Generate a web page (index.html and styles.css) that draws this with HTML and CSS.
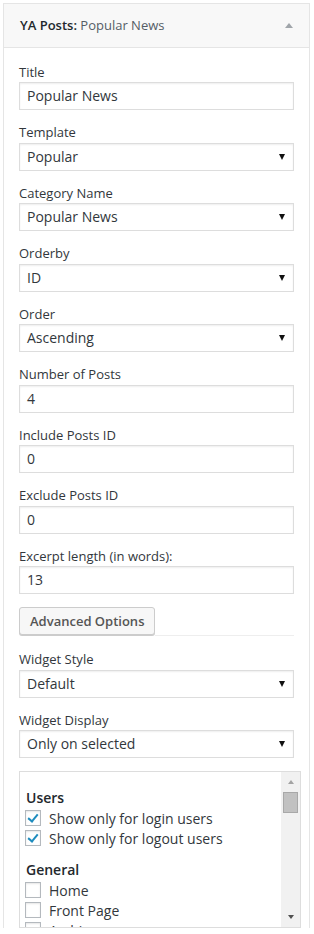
FILE: index.html
```html
<!DOCTYPE html>
<html>
<head>
  <meta charset="UTF-8">
  <link rel="stylesheet" href="styles.css">
</head>
<body>
  <div class="widget">
    <div class="widget-top">
      <h3 class="widget-title">YA Posts:<span class="in-widget-title"> Popular News</span></h3>
      <span class="toggle-arrow"></span>
    </div>

    <div class="widget-inside">
      <div class="field">
        <label>Title</label>
        <div class="text-input">Popular News</div>
      </div>
      <div class="field">
        <label>Template</label>
        <div class="select-input"><span>Popular</span><i class="caret"></i></div>
      </div>
      <div class="field">
        <label>Category Name</label>
        <div class="select-input"><span>Popular News</span><i class="caret"></i></div>
      </div>
      <div class="field">
        <label>Orderby</label>
        <div class="select-input"><span>ID</span><i class="caret"></i></div>
      </div>
      <div class="field">
        <label>Order</label>
        <div class="select-input"><span>Ascending</span><i class="caret"></i></div>
      </div>
      <div class="field">
        <label>Number of Posts</label>
        <div class="text-input">4</div>
      </div>
      <div class="field">
        <label>Include Posts ID</label>
        <div class="text-input">0</div>
      </div>
      <div class="field">
        <label>Exclude Posts ID</label>
        <div class="text-input">0</div>
      </div>
      <div class="field">
        <label>Excerpt length (in words):</label>
        <div class="text-input">13</div>
      </div>

      <div class="advanced-row">
        <button class="button">Advanced Options</button>
        <div class="advanced-line"></div>
      </div>

      <div class="field">
        <label>Widget Style</label>
        <div class="select-input"><span>Default</span><i class="caret"></i></div>
      </div>
      <div class="field">
        <label>Widget Display</label>
        <div class="select-input"><span>Only on selected</span><i class="caret"></i></div>
      </div>

      <div class="checklist">
        <div class="checklist-content">
          <h4>Users</h4>
          <div class="check-row"><span class="checkbox checked"></span>Show only for login users</div>
          <div class="check-row"><span class="checkbox checked"></span>Show only for logout users</div>
          <h4 class="group">General</h4>
          <div class="check-row"><span class="checkbox"></span>Home</div>
          <div class="check-row"><span class="checkbox"></span>Front Page</div>
          <div class="check-row"><span class="checkbox"></span>Archive</div>
        </div>
        <div class="scrollbar">
          <div class="scroll-btn"><i class="arrow-up"></i></div>
          <div class="scroll-thumb"></div>
          <div class="scroll-track"></div>
          <div class="scroll-btn"><i class="arrow-down"></i></div>
        </div>
      </div>
    </div>
  </div>
</body>
</html>
```

FILE: styles.css
```css
body {
  margin: 0;
  background: #fff;
  font-family: "Open Sans", sans-serif;
  font-size: 13px;
  color: #32373c;
}

.widget {
  width: 307px;
  margin: 3px 0 0 3px;
  border: 1px solid #e5e5e5;
  border-bottom: none;
  box-sizing: border-box;
  background: #fff;
}

.widget-top {
  height: 43px;
  display: flex;
  align-items: center;
  justify-content: space-between;
  padding: 0 16px 0 16px;
  background: #f8f8f8;
  border-bottom: 1px solid #e5e5e5;
}

.widget-title {
  margin: 0;
  font-size: 13px;
  font-weight: 600;
  color: #23282d;
  line-height: 43px;
}

.in-widget-title {
  font-weight: 400;
  color: #555d66;
}

.toggle-arrow {
  width: 0;
  height: 0;
  border-left: 4px solid transparent;
  border-right: 4px solid transparent;
  border-bottom: 5px solid #a0a5aa;
}

.widget-inside {
  padding: 14.5px 15px 0;
  display: flex;
  flex-direction: column;
  gap: 13px;
}

.field {
  display: flex;
  flex-direction: column;
}

.field label {
  line-height: 19.5px;
  color: #32373c;
}

.text-input,
.select-input {
  height: 28px;
  box-sizing: border-box;
  border: 1px solid #ddd;
  box-shadow: inset 0 1px 2px rgba(0,0,0,0.07);
  padding: 0 7px;
  font-size: 14px;
  line-height: 26px;
  color: #32373c;
  background: #fff;
}

.select-input {
  display: flex;
  align-items: center;
  justify-content: space-between;
  padding-right: 8px;
}

.caret {
  width: 0;
  height: 0;
  border-left: 3px solid transparent;
  border-right: 3px solid transparent;
  border-top: 6px solid #111;
}

.advanced-row {
  display: flex;
  align-items: flex-end;
  margin-bottom: 2px;
}

.button {
  height: 28px;
  padding: 0 10px 1px;
  border: 1px solid #ccc;
  border-radius: 3px;
  background: #f7f7f7;
  box-shadow: 0 1px 0 #ccc;
  font-family: "Open Sans", sans-serif;
  font-size: 13px;
  font-weight: 600;
  color: #555;
  line-height: 26px;
  white-space: nowrap;
}

.advanced-line {
  flex: 1;
  border-bottom: 1px solid #eee;
  margin-bottom: -1px;
}

.checklist {
  display: flex;
  width: 282px;
  height: 157px;
  box-sizing: border-box;
  border: 1px solid #ddd;
  overflow: hidden;
}

.checklist-content {
  flex: 1;
  padding: 16px 5px 0;
  overflow: hidden;
}

.checklist h4 {
  margin: 0 0 0 1px;
  font-size: 14px;
  font-weight: 600;
  line-height: 20px;
  color: #23282d;
}

.checklist h4.group {
  margin-top: 12px;
}

.check-row {
  display: flex;
  align-items: center;
  height: 20px;
  gap: 8px;
  font-size: 14px;
  color: #32373c;
  white-space: nowrap;
}

.checkbox {
  width: 16px;
  height: 16px;
  box-sizing: border-box;
  border: 1px solid #b4b9be;
  box-shadow: inset 0 1px 2px rgba(0,0,0,0.1);
  background: #fff;
  position: relative;
  flex: none;
}

.checkbox.checked::after {
  content: '';
  position: absolute;
  left: 4px;
  top: 1px;
  width: 4px;
  height: 8px;
  border-right: 2px solid #1e8cbe;
  border-bottom: 2px solid #1e8cbe;
  transform: rotate(40deg);
}

.scrollbar {
  width: 19px;
  display: flex;
  flex-direction: column;
  background: #f1f1f1;
  flex: none;
}

.scroll-btn {
  height: 20px;
  display: flex;
  align-items: center;
  justify-content: center;
}

.arrow-up {
  width: 0;
  height: 0;
  border-left: 3.5px solid transparent;
  border-right: 3.5px solid transparent;
  border-bottom: 4px solid #a3a3a3;
}

.arrow-down {
  width: 0;
  height: 0;
  border-left: 3.5px solid transparent;
  border-right: 3.5px solid transparent;
  border-top: 4px solid #505050;
}

.scroll-thumb {
  height: 21px;
  margin: 0 2px;
  box-sizing: border-box;
  background: #c1c1c1;
  border: 1px solid #a8a8a8;
}

.scroll-track {
  flex: 1;
}
```
